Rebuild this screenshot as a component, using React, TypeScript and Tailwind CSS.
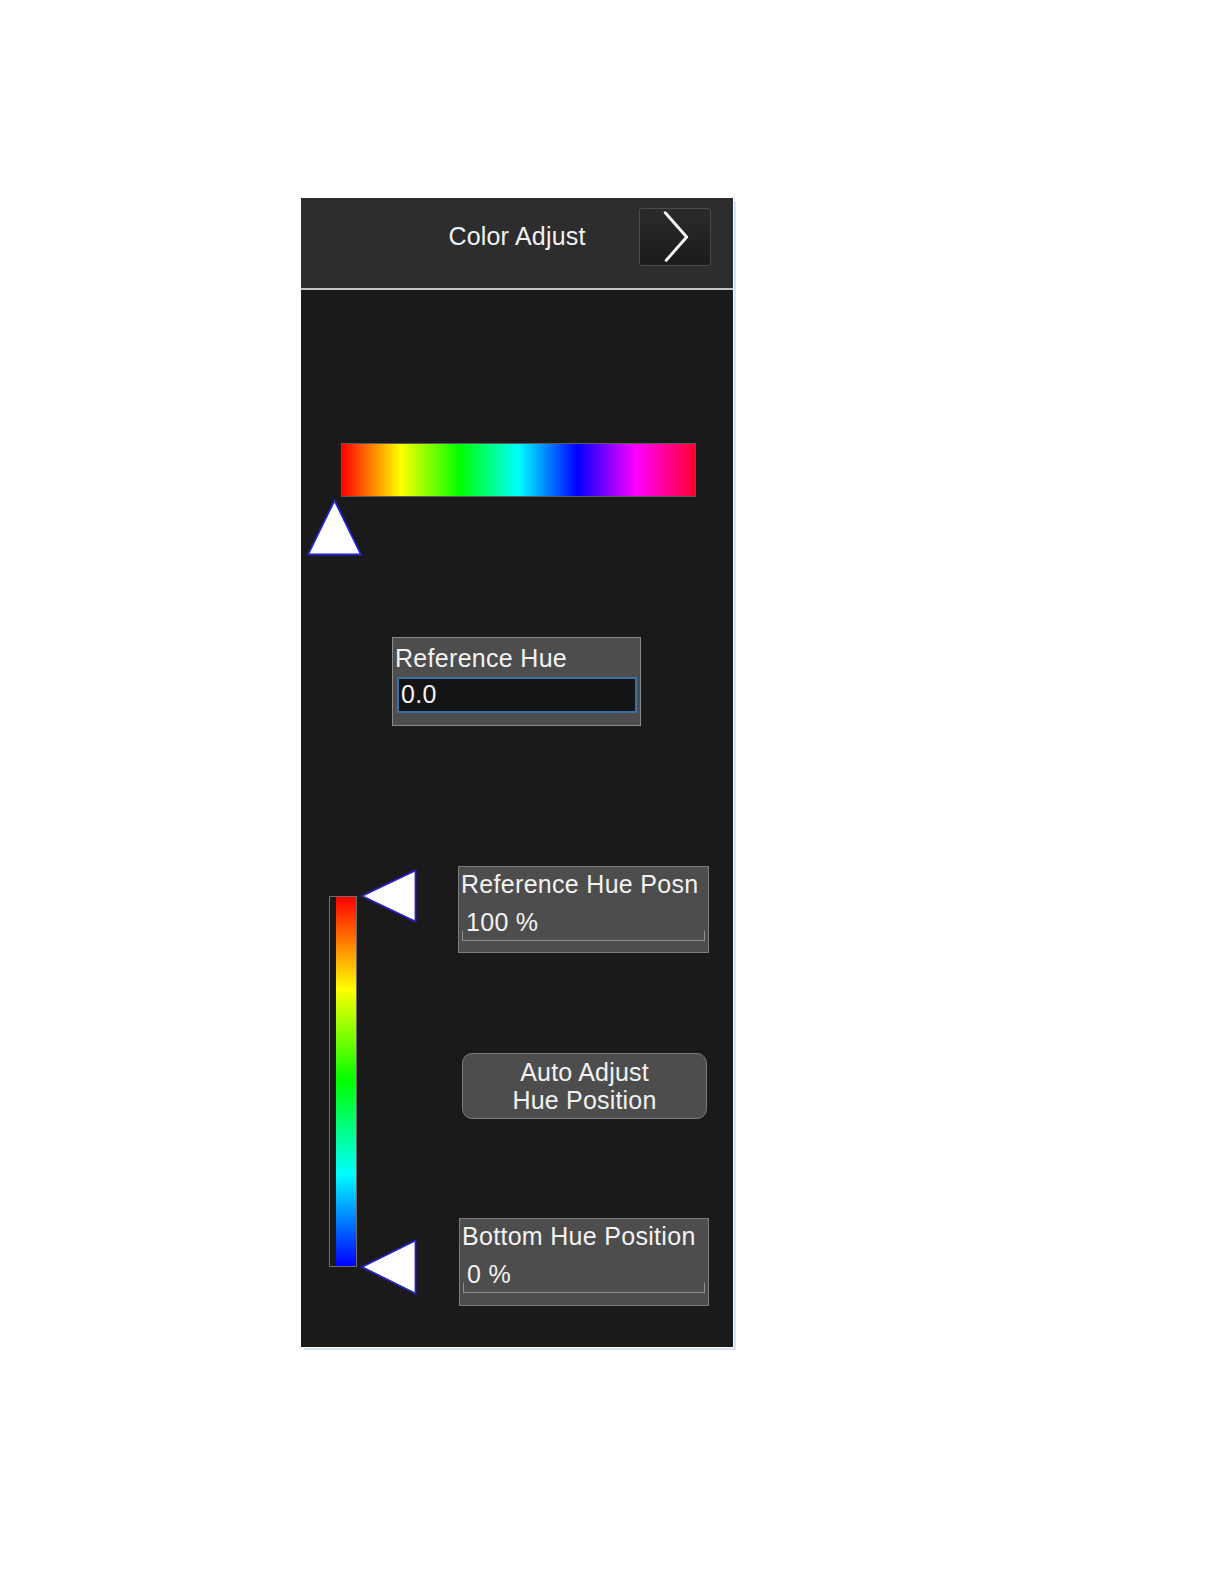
import React from "react";

function LeftTriangle({ h }: { h: number }) {
  return (
    <svg width="57" height={h} viewBox={`0 0 57 ${h}`} className="block">
      <polygon
        points={`2,${h / 2} 55.5,1.5 55.5,${h - 1.5}`}
        fill="#ffffff"
        stroke="#2424c8"
        strokeWidth="1.8"
        strokeLinejoin="miter"
      />
    </svg>
  );
}

function ValueBox({
  label,
  value,
  w,
  h,
}: {
  label: string;
  value: string;
  w: string;
  h: string;
}) {
  return (
    <div className={`${w} ${h} flex flex-col border border-[#7c7c7c] bg-[#4d4d4d]`}>
      <div className="mt-[3px] pl-[2px] text-[25px] leading-[28px] tracking-[0.3px] text-[#f2f2f2]">
        {label}
      </div>
      <div className="mt-[12px] pl-[7px] text-[25px] leading-[24px] tracking-[0.3px] text-[#f2f2f2]">
        {value}
      </div>
      <div className="mx-[3px] -mt-[3px] h-[10px] border-x border-b border-[#8e8e8e]" />
    </div>
  );
}

export default function App() {
  return (
    <div className="min-h-[1584px] w-full bg-white pl-[301px] pt-[198px] font-['Liberation_Sans',Arial,sans-serif]">
      <div className="flex h-[1149px] w-[432px] flex-col bg-[#1a1a1a] shadow-[1px_1px_0_#ffffff,3px_3px_0_#d3e4f4]">
        {/* Header */}
        <div className="grid h-[92px] grid-cols-[1fr_auto_1fr] border-b-2 border-[#c2c2c2] bg-[#2d2d2d] pt-[10px]">
          <div />
          <div className="flex h-[58px] items-center text-[25px] tracking-[0.2px] text-[#f2f2f2]">
            Color Adjust
          </div>
          <div className="flex justify-end pr-[22px]">
            <button className="flex h-[58px] w-[72px] items-center justify-center rounded-[3px] border border-[#4a4a4a] bg-[linear-gradient(to_bottom,#2b2b2b,#1b1b1b)]">
              <svg width="72" height="58" viewBox="0 0 72 58" className="block">
                <polyline
                  points="26,4 48,29 27,53"
                  fill="none"
                  stroke="#f4f4f4"
                  strokeWidth="3"
                  strokeLinecap="round"
                  strokeLinejoin="round"
                />
              </svg>
            </button>
          </div>
        </div>

        {/* Body */}
        <div className="flex flex-col">
          {/* Horizontal spectrum */}
          <div className="ml-[40px] mt-[153px] h-[54px] w-[355px] border border-[#5a5a5a] bg-[linear-gradient(to_right,#ff0000,#ffff00_16.6%,#00ff00_33.3%,#00ffff_50%,#0000ff_66.6%,#ff00ff_83.3%,#ff0030)]" />

          {/* Up triangle */}
          <div className="ml-[5px] mt-[2px]">
            <svg width="57" height="57" viewBox="0 0 57 57" className="block">
              <polygon
                points="28.5,1.5 55,55.5 2,55.5"
                fill="#ffffff"
                stroke="#2424c8"
                strokeWidth="1.8"
              />
            </svg>
          </div>

          {/* Reference Hue */}
          <div className="ml-[91px] mt-[81px] flex h-[89px] w-[249px] flex-col border border-[#8a8a8a] bg-[#4d4d4d]">
            <div className="mt-[6px] pl-[2px] text-[25px] leading-[28px] tracking-[0.3px] text-[#f2f2f2]">
              Reference Hue
            </div>
            <div className="ml-[4px] mt-[5px] flex h-[36px] w-[240px] items-center border-2 border-[#3d6fa6] bg-[#141414] pl-[2px] text-[25px] tracking-[0.3px] text-[#f2f2f2]">
              0.0
            </div>
          </div>

          {/* Lower section */}
          <div className="mt-[140px] flex items-start">
            <div className="flex items-start pl-[28px]">
              <div className="mt-[30px] flex h-[371px] w-[28px] justify-end border border-[#6e6e6e]">
                <div className="h-full w-[20px] bg-[linear-gradient(to_bottom,#ff0000,#ffff00_25%,#00ff00_50%,#00ffff_75%,#0000ff)]" />
              </div>
              <div className="ml-[3px] mt-[3px] flex h-[426px] flex-col justify-between">
                <LeftTriangle h={54} />
                <LeftTriangle h={56} />
              </div>
            </div>

            <div className="ml-[41px] flex flex-col items-start">
              <ValueBox label="Reference Hue Posn" value="100 %" w="w-[251px]" h="h-[87px]" />
              <button className="ml-[4px] mt-[100px] flex h-[66px] w-[245px] flex-col items-center justify-center rounded-[10px] border border-[#7a7a7a] bg-[#4d4d4d] text-[25px] leading-[28px] tracking-[0.2px] text-[#f2f2f2]">
                <span>Auto Adjust</span>
                <span>Hue Position</span>
              </button>
              <div className="ml-[1px] mt-[99px]">
                <ValueBox label="Bottom Hue Position" value="0 %" w="w-[250px]" h="h-[88px]" />
              </div>
            </div>
          </div>
        </div>
      </div>
    </div>
  );
}
